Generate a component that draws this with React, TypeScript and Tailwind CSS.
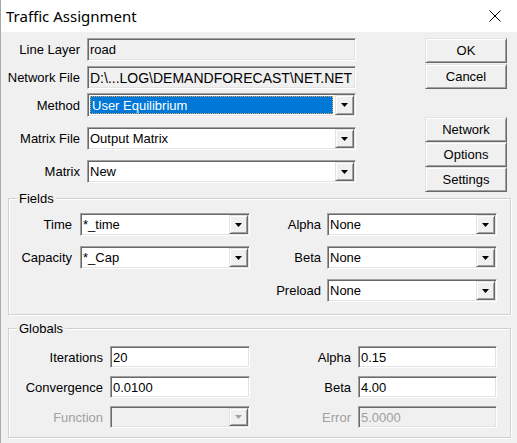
import React from "react";

const sunken =
  "border border-t-[#a0a0a0] border-l-[#a0a0a0] border-r-white border-b-white shadow-[inset_1px_1px_0_#696969,inset_-1px_-1px_0_#e3e3e3]";
const raised =
  "border border-t-[#e3e3e3] border-l-[#e3e3e3] border-r-[#696969] border-b-[#696969] shadow-[inset_1px_1px_0_#ffffff,inset_-1px_-1px_0_#a0a0a0]";

function Tri({ color = "#000" }: { color?: string }) {
  return (
    <svg width="7" height="4" viewBox="0 0 7 4">
      <path d="M0 0H7L3.5 4Z" fill={color} />
    </svg>
  );
}

function DropBtn({ disabled }: { disabled?: boolean }) {
  return (
    <div
      className={`w-[19px] flex items-center justify-center bg-[#f0f0f0] ${raised}`}
    >
      <Tri color={disabled ? "#a0a0a0" : "#000"} />
    </div>
  );
}

function Combo({
  value,
  w,
  h,
  selected,
  disabled,
}: {
  value: string;
  w: string;
  h: string;
  selected?: boolean;
  disabled?: boolean;
}) {
  return (
    <div
      className={`${sunken} ${w} ${h} flex items-stretch p-[1px] ${
        disabled ? "bg-[#f0f0f0]" : "bg-white"
      }`}
    >
      {selected ? (
        <div className="flex-1 flex items-center my-[1px] ml-[1px] mr-[2px] bg-[#0078d7] text-white border border-dotted border-[#e0a060] pl-[1px] whitespace-nowrap overflow-hidden">
          {value}
        </div>
      ) : (
        <div className="flex-1 flex items-center pl-[1px] whitespace-nowrap overflow-hidden">
          {value}
        </div>
      )}
      <DropBtn disabled={disabled} />
    </div>
  );
}

function TextBox({
  value,
  w,
  h,
  readonly,
  disabled,
  extra = "",
}: {
  value: string;
  w: string;
  h: string;
  readonly?: boolean;
  disabled?: boolean;
  extra?: string;
}) {
  return (
    <div
      className={`${sunken} ${w} ${h} flex items-center pl-[2px] whitespace-nowrap overflow-hidden ${
        readonly || disabled ? "bg-[#f0f0f0]" : "bg-white"
      } ${disabled ? "text-[#a0a0a0]" : ""} ${extra}`}
    >
      {value}
    </div>
  );
}

function Btn({ label }: { label: string }) {
  return (
    <div
      className={`${raised} h-[25px] w-[82px] flex items-center justify-center bg-[#f0f0f0]`}
    >
      {label}
    </div>
  );
}

function Group({
  title,
  className,
  children,
}: {
  title: string;
  className: string;
  children: React.ReactNode;
}) {
  return (
    <div
      className={`relative ml-[8px] w-[503px] border border-[#d0d0d0] shadow-[inset_1px_1px_0_#ffffff,1px_1px_0_#ffffff] ${className}`}
    >
      <span className="absolute -top-[8px] left-[8px] px-[2px] bg-[#f0f0f0] leading-[16px]">
        {title}
      </span>
      {children}
    </div>
  );
}

export default function App() {
  return (
    <div className="w-[517px] h-[443px] bg-[#f0f0f0] overflow-hidden text-[13px] text-black font-['Liberation_Sans',Arial,sans-serif] leading-none shadow-[inset_1px_0_0_#a8a8a8]">
      {/* Title bar */}
      <div className="h-[32px] bg-white flex items-center pl-[6px] pr-[16px] shadow-[inset_1px_0_0_#a8a8a8]">
        <span className="flex-1 text-[15px] font-['Noto_Sans',sans-serif] text-black">
          Traffic Assignment
        </span>
        <svg width="12" height="12" viewBox="0 0 12 12">
          <path d="M0.5 0.5L11.5 11.5M11.5 0.5L0.5 11.5" stroke="#000" strokeWidth="1" />
        </svg>
      </div>

      {/* Top section */}
      <div className="flex items-start pt-[6px]">
        <div className="flex flex-col w-[356px]">
          <div className="flex items-center h-[23px]">
            <div className="w-[80px] text-right">Line Layer</div>
            <div className="ml-[7px]">
              <TextBox value="road" w="w-[269px]" h="h-[23px]" readonly />
            </div>
          </div>
          <div className="flex items-center h-[23px] mt-[5px]">
            <div className="w-[80px] text-right">Network File</div>
            <div className="ml-[7px]">
              <TextBox
                value="D:\...LOG\DEMANDFORECAST\NET.NET"
                w="w-[269px]"
                h="h-[23px]"
                readonly
                extra="text-[14px]"
              />
            </div>
          </div>
          <div className="flex items-center h-[24px] mt-[4px]">
            <div className="w-[80px] text-right">Method</div>
            <div className="ml-[7px]">
              <Combo value="User Equilibrium" w="w-[269px]" h="h-[24px]" selected />
            </div>
          </div>
          <div className="flex items-center h-[23px] mt-[10px]">
            <div className="w-[80px] text-right">Matrix File</div>
            <div className="ml-[7px]">
              <Combo value="Output Matrix" w="w-[269px]" h="h-[23px]" />
            </div>
          </div>
          <div className="flex items-center h-[23px] mt-[10px]">
            <div className="w-[80px] text-right">Matrix</div>
            <div className="ml-[7px]">
              <Combo value="New" w="w-[269px]" h="h-[23px]" />
            </div>
          </div>
        </div>
        <div className="ml-[69px] flex flex-col">
          <Btn label="OK" />
          <div className="mt-[1px]">
            <Btn label="Cancel" />
          </div>
          <div className="mt-[28px]">
            <Btn label="Network" />
          </div>
          <Btn label="Options" />
          <Btn label="Settings" />
        </div>
      </div>

      {/* Fields */}
      <Group title="Fields" className="mt-[6px] h-[117px] pt-[14px]">
        <div className="flex flex-col gap-[10px]">
          <div className="flex items-center h-[23px]">
            <div className="w-[63px] text-right">Time</div>
            <div className="ml-[8px]">
              <Combo value="*_time" w="w-[170px]" h="h-[23px]" />
            </div>
            <div className="w-[71px] text-right">Alpha</div>
            <div className="ml-[6px]">
              <Combo value="None" w="w-[170px]" h="h-[23px]" />
            </div>
          </div>
          <div className="flex items-center h-[23px]">
            <div className="w-[63px] text-right">Capacity</div>
            <div className="ml-[8px]">
              <Combo value="*_Cap" w="w-[170px]" h="h-[23px]" />
            </div>
            <div className="w-[71px] text-right">Beta</div>
            <div className="ml-[6px]">
              <Combo value="None" w="w-[170px]" h="h-[23px]" />
            </div>
          </div>
          <div className="flex items-center h-[23px]">
            <div className="w-[241px]" />
            <div className="w-[71px] text-right">Preload</div>
            <div className="ml-[6px]">
              <Combo value="None" w="w-[170px]" h="h-[23px]" />
            </div>
          </div>
        </div>
      </Group>

      {/* Globals */}
      <Group title="Globals" className="mt-[13px] h-[110px] pt-[17px]">
        <div className="flex flex-col gap-[8px]">
          <div className="flex items-center h-[22px]">
            <div className="w-[94px] text-right">Iterations</div>
            <div className="ml-[7px]">
              <TextBox value="20" w="w-[140px]" h="h-[22px]" />
            </div>
            <div className="w-[101px] text-right">Alpha</div>
            <div className="ml-[7px]">
              <TextBox value="0.15" w="w-[139px]" h="h-[22px]" />
            </div>
          </div>
          <div className="flex items-center h-[22px]">
            <div className="w-[94px] text-right">Convergence</div>
            <div className="ml-[7px]">
              <TextBox value="0.0100" w="w-[140px]" h="h-[22px]" />
            </div>
            <div className="w-[101px] text-right">Beta</div>
            <div className="ml-[7px]">
              <TextBox value="4.00" w="w-[139px]" h="h-[22px]" />
            </div>
          </div>
          <div className="flex items-center h-[22px]">
            <div className="w-[94px] text-right text-[#a0a0a0]">Function</div>
            <div className="ml-[7px]">
              <Combo value="" w="w-[140px]" h="h-[22px]" disabled />
            </div>
            <div className="w-[101px] text-right text-[#a0a0a0]">Error</div>
            <div className="ml-[7px]">
              <TextBox value="5.0000" w="w-[139px]" h="h-[22px]" disabled />
            </div>
          </div>
        </div>
      </Group>
    </div>
  );
}
